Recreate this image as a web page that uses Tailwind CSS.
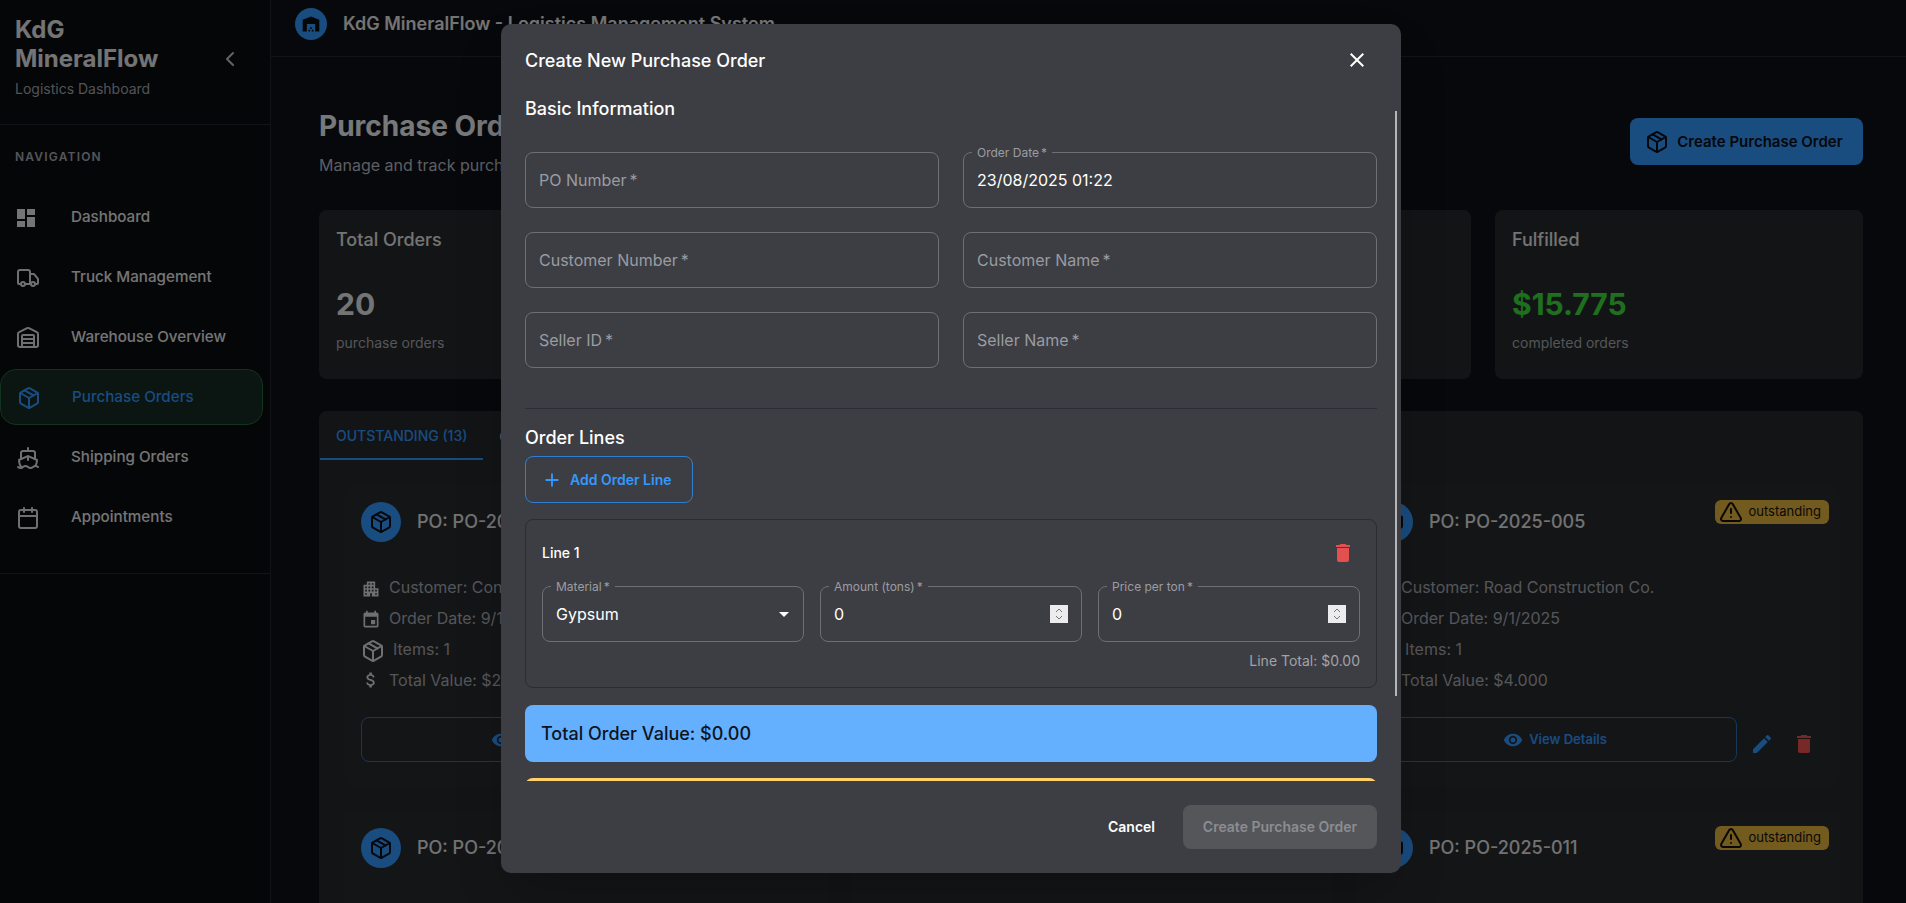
<!DOCTYPE html>
<html lang="en">
<head>
  <meta charset="UTF-8" />
  <meta name="viewport" content="width=device-width, initial-scale=1.0" />
  <title>KdG MineralFlow</title>
  <script src="https://cdn.jsdelivr.net/npm/@tailwindcss/browser@4"></script>
</head>
<body class="bg-[#0f1116] font-[Inter,sans-serif] text-[#e8e8e8] h-screen overflow-hidden flex relative">

  <!-- sidebar -->
  <aside class="w-[271px] shrink-0 h-full bg-[#0a0c10] border-r border-[#24272d]">
    <div class="h-[125px] border-b border-[#24272d] pl-[15px] pr-[28px] pt-[15px] flex items-center justify-between">
      <div class="self-start">
        <h2 class="text-2xl leading-[29px] font-bold w-[150px]">KdG MineralFlow</h2>
        <p class="text-sm leading-5 mt-[6px] text-[#a4a7ac]">Logistics Dashboard</p>
      </div>
      <svg class="w-6 h-6 -mt-[22px] text-[#c4c6ca]" viewBox="0 0 24 24" fill="none" stroke="currentColor" stroke-width="2" stroke-linecap="round" stroke-linejoin="round"><path d="m15 18-6-6 6-6"/></svg>
    </div>
    <div class="h-[449px] border-b border-[#24272d] pt-6">
      <p class="pl-[15px] text-xs leading-4 font-semibold tracking-[1.2px] text-[#aaadb3]">NAVIGATION</p>
      <nav class="mt-6 pr-[7px] flex flex-col gap-1 text-[15.2px] font-medium text-[#eaeaea]">
        <a class="h-14 pt-px flex items-center pl-[14px] gap-[33px]">
          <svg class="w-6 h-6 fill-current" viewBox="0 0 24 24"><path d="M3 13h8V3H3zm0 8h8v-6H3zm10 0h8V11h-8zm0-18v6h8V3z"/></svg>Dashboard
        </a>
        <a class="h-14 pt-px flex items-center pl-[14px] gap-[28px]">
          <svg class="w-[30px] h-[30px] -ml-[1px] scale-[0.8] text-[#e0e0e0]" viewBox="0 0 24 24" fill="none" stroke="currentColor" stroke-width="2" stroke-linecap="round" stroke-linejoin="round"><path d="M14 18V6a2 2 0 0 0-2-2H4a2 2 0 0 0-2 2v11a1 1 0 0 0 1 1h2"/><path d="M15 18H9"/><path d="M19 18h2a1 1 0 0 0 1-1v-3.65a1 1 0 0 0-.22-.624l-3.48-4.35A1 1 0 0 0 17.52 8H14"/><circle cx="17" cy="18" r="2"/><circle cx="7" cy="18" r="2"/></svg>Truck Management
        </a>
        <a class="h-14 pt-px flex items-center pl-[14px] gap-[28px]">
          <svg class="w-[30px] h-[30px] -ml-[1px] scale-[0.8] text-[#e0e0e0]" viewBox="0 0 24 24" fill="none" stroke="currentColor" stroke-width="2" stroke-linecap="round" stroke-linejoin="round"><path d="M18 21V10a1 1 0 0 0-1-1H7a1 1 0 0 0-1 1v11"/><path d="M22 19a2 2 0 0 1-2 2H4a2 2 0 0 1-2-2V8a2 2 0 0 1 1.132-1.803l7.95-3.974a2 2 0 0 1 1.837 0l7.95 3.974A2 2 0 0 1 22 8z"/><path d="M6 13h12"/><path d="M6 17h12"/></svg>Warehouse Overview
        </a>
        <a class="h-14 pt-px flex items-center pl-[14px] gap-[28px] rounded-2xl border border-[#22663e] bg-[#162a24] text-[#3399ff]">
          <svg class="w-[30px] h-[30px] -ml-[1px] scale-[0.8]" viewBox="0 0 24 24" fill="none" stroke="currentColor" stroke-width="2" stroke-linecap="round" stroke-linejoin="round"><path d="m7.5 4.27 9 5.15"/><path d="M21 8a2 2 0 0 0-1-1.73l-7-4a2 2 0 0 0-2 0l-7 4A2 2 0 0 0 3 8v8a2 2 0 0 0 1 1.73l7 4a2 2 0 0 0 2 0l7-4A2 2 0 0 0 21 16Z"/><path d="m3.3 7 8.7 5 8.7-5"/><path d="M12 22V12"/></svg>Purchase Orders
        </a>
        <a class="h-14 pt-px flex items-center pl-[14px] gap-[28px]">
          <svg class="w-[30px] h-[30px] -ml-[1px] scale-[0.8] text-[#e0e0e0]" viewBox="0 0 24 24" fill="none" stroke="currentColor" stroke-width="2" stroke-linecap="round" stroke-linejoin="round"><path d="M12 10.189V14"/><path d="M12 2v3"/><path d="M19 13V7a2 2 0 0 0-2-2H7a2 2 0 0 0-2 2v6"/><path d="M19.38 20A11.6 11.6 0 0 0 21 14l-8.188-3.639a2 2 0 0 0-1.624 0L3 14a11.6 11.6 0 0 0 2.81 7.76"/><path d="M2 21c.6.5 1.2 1 2.5 1 2.5 0 2.5-2 5-2 1.3 0 1.9.5 2.5 1s1.2 1 2.5 1c2.5 0 2.5-2 5-2 1.3 0 1.9.5 2.5 1"/></svg>Shipping Orders
        </a>
        <a class="h-14 pt-px flex items-center pl-[14px] gap-[28px]">
          <svg class="w-[30px] h-[30px] -ml-[1px] scale-[0.8] text-[#e0e0e0]" viewBox="0 0 24 24" fill="none" stroke="currentColor" stroke-width="2" stroke-linecap="round" stroke-linejoin="round"><path d="M8 2v4"/><path d="M16 2v4"/><rect width="18" height="18" x="3" y="4" rx="2"/><path d="M3 10h18"/></svg>Appointments
        </a>
      </nav>
    </div>
  </aside>

  <!-- main -->
  <div class="flex-1 min-w-0 h-full overflow-hidden">
    <header class="h-[57px] border-b border-[#24272d] pl-[24px] pt-[8px] flex items-start gap-4">
      <div class="w-8 h-8 rounded-full bg-[#3399ff] flex items-center justify-center text-[#0a0c10]">
        <svg class="w-5 h-5 fill-current" viewBox="0 0 24 24"><path d="M22 21V7L12 3 2 7v14h5v-9h10v9zm-11-2H9v2h2zm2-3h-2v2h2zm2 3h-2v2h2z"/></svg>
      </div>
      <h1 class="text-lg leading-8 font-semibold whitespace-nowrap">KdG MineralFlow - Logistics Management System</h1>
    </header>

    <main class="w-[1544px] ml-12 pt-[51px]">
      <div class="flex items-center justify-between">
        <div>
          <h2 class="text-[28px] leading-9 font-bold text-[#eef1f5]">Purchase Orders</h2>
          <p class="mt-[9px] leading-6 text-[#b8bdc5]">Manage and track purchase orders from customers</p>
        </div>
        <button class="w-[233px] h-[47px] -mt-[2px] pr-[5px] pt-px rounded-lg bg-[#3399ff] text-[#0a0f18] text-[15px] font-semibold flex items-center justify-center gap-2">
          <svg class="w-6 h-6" viewBox="0 0 24 24" fill="none" stroke="currentColor" stroke-width="2" stroke-linecap="round" stroke-linejoin="round"><path d="m7.5 4.27 9 5.15"/><path d="M21 8a2 2 0 0 0-1-1.73l-7-4a2 2 0 0 0-2 0l-7 4A2 2 0 0 0 3 8v8a2 2 0 0 0 1 1.73l7 4a2 2 0 0 0 2 0l7-4A2 2 0 0 0 21 16Z"/><path d="m3.3 7 8.7 5 8.7-5"/><path d="M12 22V12"/></svg>
          Create Purchase Order
        </button>
      </div>

      <div class="mt-[33px] grid grid-cols-4 gap-6">
        <div class="h-[169px] rounded-lg bg-[#27292d] px-[17px] pt-4">
          <p class="text-lg leading-7 font-medium">Total Orders</p>
          <p class="mt-8 text-3xl leading-9 font-bold">20</p>
          <p class="mt-[11px] text-sm leading-5 text-[#a8abb2]">purchase orders</p>
        </div>
        <div class="h-[169px] rounded-lg bg-[#27292d] px-[17px] pt-4">
          <p class="text-lg leading-7 font-medium">Outstanding</p>
          <p class="mt-8 text-3xl leading-9 font-bold text-[#e0b040]">13</p>
          <p class="mt-[11px] text-sm leading-5 text-[#a8abb2]">pending orders</p>
        </div>
        <div class="h-[169px] rounded-lg bg-[#27292d] px-[17px] pt-4">
          <p class="text-lg leading-7 font-medium">Total Value</p>
          <p class="mt-8 text-3xl leading-9 font-bold text-[#3399ff]">$42.150</p>
          <p class="mt-[11px] text-sm leading-5 text-[#a8abb2]">all orders</p>
        </div>
        <div class="h-[169px] rounded-lg bg-[#27292d] px-[17px] pt-4">
          <p class="text-lg leading-7 font-medium">Fulfilled</p>
          <p class="mt-8 text-3xl leading-9 font-bold text-[#3de03d]">$15.775</p>
          <p class="mt-[11px] text-sm leading-5 text-[#a8abb2]">completed orders</p>
        </div>
      </div>

      <section class="mt-8 h-[600px] rounded-t-lg bg-[#27292d]">
        <div class="flex h-[49px] pl-px text-sm font-medium">
          <div class="h-full px-4 pt-[2px] flex items-center border-b-2 border-[#3399ff] text-[#3399ff]">OUTSTANDING (13)</div>
          <div class="h-full px-4 pt-[2px] flex items-center text-[#b0b3b8]">COMPLETED (7)</div>
        </div>
        <div id="orders" class="pl-[26px] pr-6 pt-6 grid grid-cols-3 gap-6"></div>
      </section>
    </main>
  </div>

  <!-- backdrop -->
  <div class="absolute inset-0 bg-black/50"></div>

  <!-- dialog -->
  <div class="absolute left-[501px] top-6 w-[900px] h-[849px] rounded-[10px] bg-[#3d3e43] shadow-2xl flex flex-col text-white">
    <div class="h-[71px] shrink-0 pl-6 pr-[32px] flex items-center justify-between">
      <h2 class="text-lg font-medium pt-[2px]">Create New Purchase Order</h2>
      <svg class="w-6 h-6 fill-current" viewBox="0 0 24 24"><path d="M19 6.41 17.59 5 12 10.59 6.41 5 5 6.41 10.59 12 5 17.59 6.41 19 12 13.41 17.59 19 19 17.59 13.41 12z"/></svg>
    </div>

    <div class="flex-1 min-h-0 overflow-hidden px-6 relative">
      <h3 class="text-lg leading-7 font-medium">Basic Information</h3>

      <div class="mt-[29px] grid grid-cols-2 gap-6">
        <div class="h-14 rounded-lg border border-[#6e6f74] px-[13px] flex items-center text-[#999ca1]">PO Number&thinsp;*</div>
        <div class="relative h-14 rounded-lg border border-[#6e6f74] px-[13px] flex items-center">
          <span class="absolute -top-[8px] left-2 px-[5px] bg-[#3d3e43] text-xs leading-4 text-[#9a9da2]">Order Date&thinsp;*</span>
          23/08/2025 01:22
        </div>
        <div class="h-14 rounded-lg border border-[#6e6f74] px-[13px] flex items-center text-[#999ca1]">Customer Number&thinsp;*</div>
        <div class="h-14 rounded-lg border border-[#6e6f74] px-[13px] flex items-center text-[#999ca1]">Customer Name&thinsp;*</div>
        <div class="h-14 rounded-lg border border-[#6e6f74] px-[13px] flex items-center text-[#999ca1]">Seller ID&thinsp;*</div>
        <div class="h-14 rounded-lg border border-[#6e6f74] px-[13px] flex items-center text-[#999ca1]">Seller Name&thinsp;*</div>
      </div>

      <div class="mt-10 border-t border-[#2b2e38]"></div>

      <h3 class="mt-[15px] text-lg leading-7 font-medium">Order Lines</h3>
      <button class="mt-1 w-[168px] h-[47px] rounded-lg border border-[#2f7fd0] text-[#3399ff] text-sm font-semibold flex items-center pl-[15px] gap-[7px]">
        <svg class="w-[22px] h-[22px] fill-current" viewBox="0 0 24 24"><path d="M19 13h-6v6h-2v-6H5v-2h6V5h2v6h6z"/></svg>
        Add Order Line
      </button>

      <div class="mt-4 h-[169px] rounded-lg border border-[#2a2c33] px-4 pt-4">
        <div class="h-[34px] flex items-center justify-between">
          <span class="text-sm font-medium">Line 1</span>
          <svg class="w-6 h-6 mr-[5px] fill-[#e45050]" viewBox="0 0 24 24"><path d="M6 19c0 1.1.9 2 2 2h8c1.1 0 2-.9 2-2V7H6zM19 4h-3.5l-1-1h-5l-1 1H5v2h14z"/></svg>
        </div>
        <div class="mt-4 grid grid-cols-3 gap-4">
          <div class="relative h-14 rounded-lg border border-[#6e6f74] pl-[13px] pr-[7px] flex items-center justify-between">
            <span class="absolute -top-[8px] left-2 px-[5px] bg-[#3d3e43] text-xs leading-4 text-[#9a9da2]">Material&thinsp;*</span>
            Gypsum
            <svg class="w-6 h-6 fill-current" viewBox="0 0 24 24"><path d="m7 10 5 5 5-5z"/></svg>
          </div>
          <div class="relative h-14 rounded-lg border border-[#6e6f74] pl-[13px] pr-[13px] flex items-center justify-between">
            <span class="absolute -top-[8px] left-2 px-[5px] bg-[#3d3e43] text-xs leading-4 text-[#9a9da2]">Amount (tons)&thinsp;*</span>
            0
            <div class="w-[18px] h-[18px] bg-[#ececee] flex items-center justify-center">
              <svg class="w-3 h-[14px] text-[#777]" viewBox="0 0 12 14" fill="none" stroke="currentColor"><path d="m3 5 3-3 3 3M3 9l3 3 3-3"/></svg>
            </div>
          </div>
          <div class="relative h-14 rounded-lg border border-[#6e6f74] pl-[13px] pr-[13px] flex items-center justify-between">
            <span class="absolute -top-[8px] left-2 px-[5px] bg-[#3d3e43] text-xs leading-4 text-[#9a9da2]">Price per ton&thinsp;*</span>
            0
            <div class="w-[18px] h-[18px] bg-[#ececee] flex items-center justify-center">
              <svg class="w-3 h-[14px] text-[#777]" viewBox="0 0 12 14" fill="none" stroke="currentColor"><path d="m3 5 3-3 3 3M3 9l3 3 3-3"/></svg>
            </div>
          </div>
        </div>
        <p class="mt-[9px] text-right text-sm leading-5 text-[#a0a3a8]">Line Total: $0.00</p>
      </div>

      <div class="mt-[17px] h-[57px] rounded-lg bg-[#64b0ff] pl-4 flex items-center text-lg font-medium text-[#0d1420]">Total Order Value: $0.00</div>
      <div class="mt-4 h-40 rounded-t-lg bg-[#ffd166]"></div>

      <!-- scrollbar thumb -->
      <div class="absolute right-[4px] top-[16px] w-[2px] h-[585px] bg-[#b5b6b9]"></div>
    </div>

    <div class="h-[92px] shrink-0 pr-6 pt-6 flex items-start justify-end gap-3">
      <button class="h-11 px-4 text-sm font-semibold">Cancel</button>
      <button class="h-11 w-[194px] rounded-lg bg-[#55565a] text-[#8c8d91] text-sm font-semibold">Create Purchase Order</button>
    </div>
  </div>

  <script>
    const orders = [
      ["PO-2025-001", "Construction Co.", "9/1/2025", "$2.500"],
      ["PO-2025-003", "Build Corp", "9/1/2025", "$3.150"],
      ["PO-2025-005", "Road Construction Co.", "9/1/2025", "$4.000"],
      ["PO-2025-007", "Concrete Works", "9/2/2025", "$2.800"],
      ["PO-2025-009", "Build Corp", "9/2/2025", "$1.900"],
      ["PO-2025-011", "Road Construction Co.", "9/2/2025", "$3.600"],
    ];
    const box = '<path d="m7.5 4.27 9 5.15"/><path d="M21 8a2 2 0 0 0-1-1.73l-7-4a2 2 0 0 0-2 0l-7 4A2 2 0 0 0 3 8v8a2 2 0 0 0 1 1.73l7 4a2 2 0 0 0 2 0l7-4A2 2 0 0 0 21 16Z"/><path d="m3.3 7 8.7 5 8.7-5"/><path d="M12 22V12"/>';

    document.getElementById("orders").innerHTML = orders.map(([po, customer, date, total]) => `
      <div class="h-[302px] rounded-lg bg-[#282a2f] pl-4 pr-[10px] pt-4">
        <div class="flex items-start justify-between">
          <div class="pt-[2px] flex items-center gap-4">
            <div class="w-10 h-10 rounded-full bg-[#3399ff] text-[#0a0f18] flex items-center justify-center">
              <svg class="w-6 h-6" viewBox="0 0 24 24" fill="none" stroke="currentColor" stroke-width="2" stroke-linecap="round" stroke-linejoin="round">${box}</svg>
            </div>
            <span class="text-lg font-medium text-[#e4e4e4]">PO: ${po}</span>
          </div>
          <span class="h-6 rounded-md bg-[#e6b53c] text-[#14110a] text-[13px] pl-1 pr-2 flex items-center gap-[5px]">
            <svg class="w-6 h-6" viewBox="0 0 24 24" fill="none" stroke="currentColor" stroke-width="2" stroke-linecap="round" stroke-linejoin="round"><path d="m21.73 18-8-14a2 2 0 0 0-3.48 0l-8 14A2 2 0 0 0 4 21h16a2 2 0 0 0 1.73-3"/><path d="M12 9v4"/><path d="M12 17h.01"/></svg>
            outstanding
          </span>
        </div>
        <div class="mt-[33px] flex flex-col gap-[7px] text-[#a8acb3]">
          <div class="h-6 flex items-center gap-2">
            <svg class="w-5 h-5 mt-1 fill-[#e0e0e0]" viewBox="0 0 24 24"><path d="M17 11V3H7v4H3v14h8v-4h2v4h8V11zM7 19H5v-2h2zm0-4H5v-2h2zm0-4H5V9h2zm4 4H9v-2h2zm0-4H9V9h2zm0-4H9V5h2zm4 8h-2v-2h2zm0-4h-2V9h2zm0-4h-2V5h2zm4 12h-2v-2h2zm0-4h-2v-2h2z"/></svg>
            Customer: ${customer}
          </div>
          <div class="h-6 flex items-center gap-2">
            <svg class="w-5 h-5 mt-1 fill-[#e0e0e0]" viewBox="0 0 24 24"><path d="M17 12h-5v5h5zM16 1v2H8V1H6v2H5c-1.11 0-1.99.9-1.99 2L3 19c0 1.1.89 2 2 2h14c1.1 0 2-.9 2-2V5c0-1.1-.9-2-2-2h-1V1zm3 18H5V8h14z"/></svg>
            Order Date: ${date}
          </div>
          <div class="h-6 flex items-center gap-2">
            <svg class="w-6 h-6 mt-1 text-[#e0e0e0]" viewBox="0 0 24 24" fill="none" stroke="currentColor" stroke-width="2" stroke-linecap="round" stroke-linejoin="round">${box}</svg>
            Items: 1
          </div>
          <div class="h-6 flex items-center gap-2">
            <svg class="w-5 h-5 fill-[#e0e0e0]" viewBox="0 0 24 24"><path d="M11.8 10.9c-2.27-.59-3-1.2-3-2.15 0-1.09 1.01-1.85 2.7-1.85 1.78 0 2.44.85 2.5 2.1h2.21c-.07-1.72-1.12-3.3-3.21-3.81V3h-3v2.16c-1.94.42-3.5 1.68-3.5 3.61 0 2.31 1.91 3.46 4.7 4.13 2.5.6 3 1.48 3 2.41 0 .69-.49 1.79-2.7 1.79-2.06 0-2.87-.92-2.98-2.1h-2.2c.12 2.19 1.76 3.42 3.68 3.83V21h3v-2.15c1.95-.37 3.5-1.5 3.5-3.55 0-2.84-2.43-3.81-4.7-4.4"/></svg>
            Total Value: ${total}
          </div>
        </div>
        <div class="mt-[25px] h-[45px] flex items-center">
          <button class="flex-1 h-[45px] rounded-lg border border-[#2f6fb0] text-[#3399ff] text-[13px] font-semibold flex items-center justify-center gap-[6px]">
            <svg class="w-5 h-5 fill-current" viewBox="0 0 24 24"><path d="M12 4.5C7 4.5 2.73 7.61 1 12c1.73 4.39 6 7.5 11 7.5s9.27-3.11 11-7.5c-1.73-4.39-6-7.5-11-7.5M12 17c-2.76 0-5-2.24-5-5s2.24-5 5-5 5 2.24 5 5-2.24 5-5 5m0-8c-1.66 0-3 1.34-3 3s1.34 3 3 3 3-1.34 3-3-1.34-3-3-3"/></svg>
            View Details
          </button>
          <div class="ml-[5px] mt-2 w-10 h-10 flex items-center justify-center text-[#3399ff]">
            <svg class="w-6 h-6 fill-current" viewBox="0 0 24 24"><path d="M3 17.25V21h3.75L17.81 9.94l-3.75-3.75zM20.71 7.04c.39-.39.39-1.02 0-1.41l-2.34-2.34a.996.996 0 0 0-1.41 0l-1.83 1.83 3.75 3.75z"/></svg>
          </div>
          <div class="ml-[2px] mr-[5px] mt-2 w-10 h-10 flex items-center justify-center text-[#ef5350]">
            <svg class="w-6 h-6 fill-current" viewBox="0 0 24 24"><path d="M6 19c0 1.1.9 2 2 2h8c1.1 0 2-.9 2-2V7H6zM19 4h-3.5l-1-1h-5l-1 1H5v2h14z"/></svg>
          </div>
        </div>
      </div>`).join("");
  </script>
</body>
</html>
